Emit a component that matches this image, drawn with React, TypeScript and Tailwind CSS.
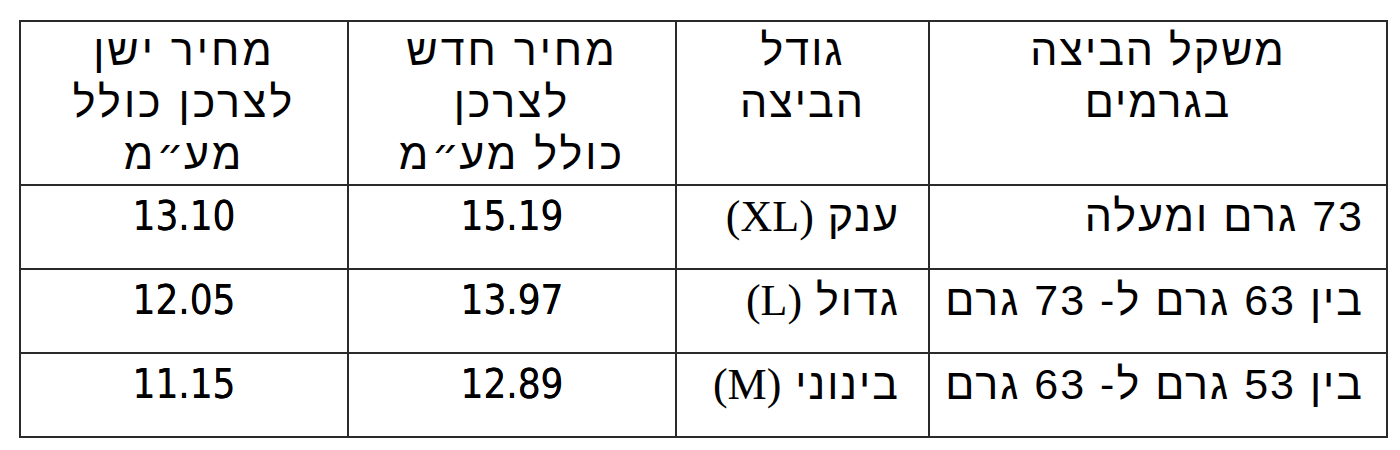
import React from "react";

const heb = { fontFamily: '"Liberation Sans", Arial, sans-serif' };
const num = { fontFamily: '"DejaVu Sans", Verdana, sans-serif' };
const serif = { fontFamily: '"Liberation Serif", "Times New Roman", serif' };

function Maam() {
  return (
    <>
      מע
      <span className="tracking-[0px]" style={{ fontFamily: '"DejaVu Sans", sans-serif' }}>
        ״
      </span>
      מ
    </>
  );
}

export default function App() {
  const rows = [
    { w: "73 גרם ומעלה", s: "ענק", code: "XL", n: "15.19", o: "13.10" },
    { w: "בין 63 גרם ל- 73 גרם", s: "גדול", code: "L", n: "13.97", o: "12.05" },
    { w: "בין 53 גרם ל- 63 גרם", s: "בינוני", code: "M", n: "12.89", o: "11.15" },
  ];
  const cell = "border-2 border-[#2a2a2a] align-top";
  return (
    <div className="w-[1400px] h-[450px] bg-white pt-[20px] pl-[19px]">
      <table
        dir="rtl"
        className="table-fixed border-collapse w-[1367px] text-black text-[43px] leading-[52px] tracking-[2px]"
        style={heb}
      >
        <colgroup>
          <col className="w-[458px]" />
          <col className="w-[253px]" />
          <col className="w-[328px]" />
          <col className="w-[328px]" />
        </colgroup>
        <thead>
          <tr className="h-[164px]">
            <th className={`${cell} text-center font-normal pt-[2px]`}>
              משקל הביצה
              <br />
              בגרמים
            </th>
            <th className={`${cell} text-center font-normal pt-[2px]`}>
              גודל
              <br />
              הביצה
            </th>
            <th className={`${cell} text-center font-normal pt-[2px] tracking-[3px]`}>
              מחיר חדש
              <br />
              לצרכן
              <br />
              כולל <Maam />
            </th>
            <th className={`${cell} text-center font-normal pt-[2px] tracking-[3px]`}>
              מחיר ישן
              <br />
              לצרכן כולל
              <br />
              <Maam />
            </th>
          </tr>
        </thead>
        <tbody>
          {rows.map((r) => (
            <tr key={r.n} className="h-[84px]">
              <td className={`${cell} text-right pr-[22px] pt-[4px]`}>{r.w}</td>
              <td className={`${cell} text-right pr-[28px] pt-[4px]`}>
                {r.s}{" "}
                <span className="text-[44px] tracking-normal" style={serif}>
                  ({r.code})
                </span>
              </td>
              <td
                className={`${cell} text-center pt-[4px] text-[40px] tracking-normal font-stretch-condensed [text-shadow:0_0_0.6px_#000]`}
                style={num}
              >
                {r.n}
              </td>
              <td
                className={`${cell} text-center pt-[4px] text-[40px] tracking-normal font-stretch-condensed [text-shadow:0_0_0.6px_#000]`}
                style={num}
              >
                {r.o}
              </td>
            </tr>
          ))}
        </tbody>
      </table>
    </div>
  );
}
